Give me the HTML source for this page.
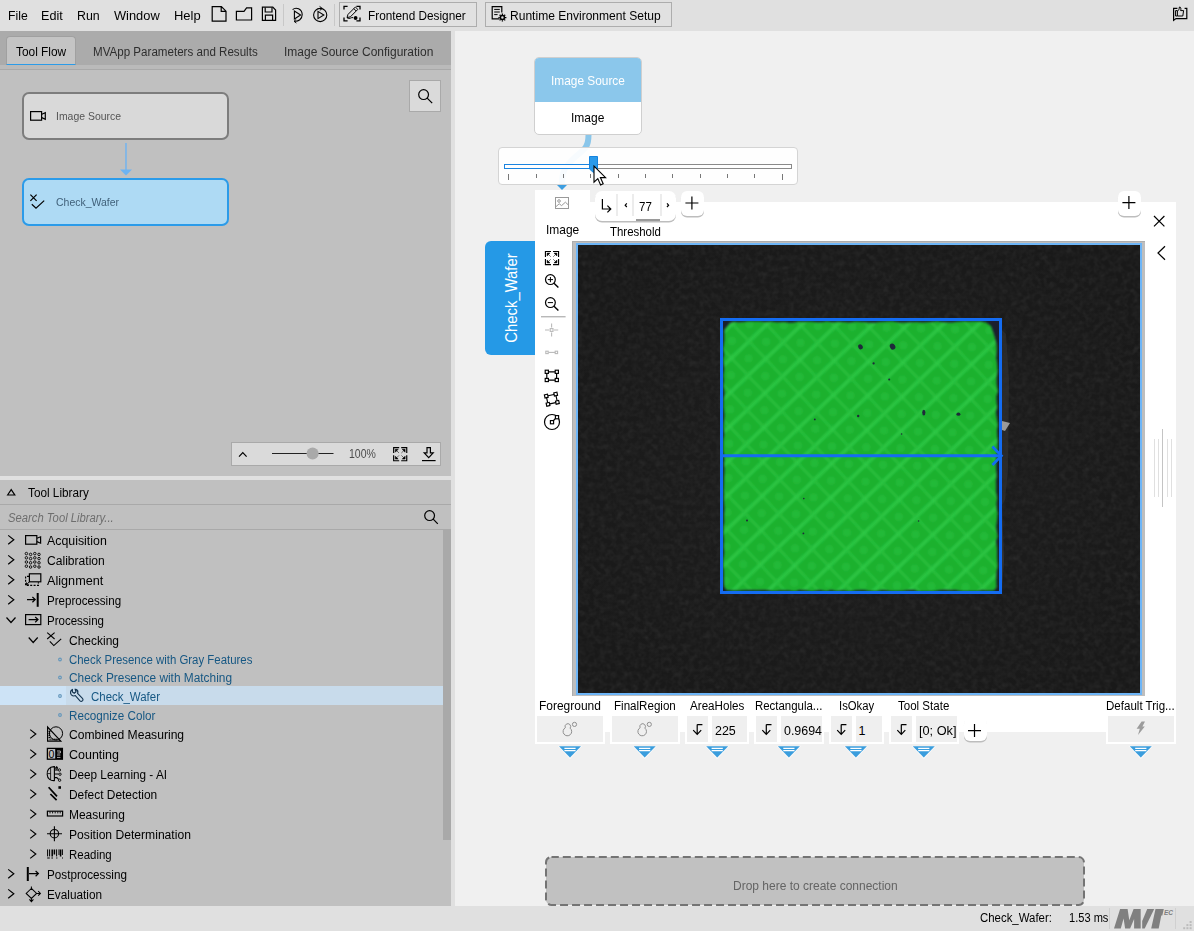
<!DOCTYPE html>
<html><head><meta charset="utf-8">
<style>
*{box-sizing:border-box;margin:0;padding:0}
html,body{width:1194px;height:931px;overflow:hidden;background:#f0f0f0;font-family:"Liberation Sans",sans-serif;font-size:12px;color:#000}
.a{position:absolute}
.t{position:absolute;white-space:nowrap;line-height:16px;height:16px}
svg{position:absolute;overflow:visible}
.tb{border:1px solid #adadad;background:#e1e1e1}
.gb{position:absolute;background:#efefef;top:716px;height:26px}
.wt{position:absolute;background:#fff;top:700px;height:44px}
.k{stroke:#000;fill:none;stroke-width:1.2}
</style></head><body>
<!-- ================= MENUBAR ================= -->
<div class="a" style="left:0;top:0;width:1194px;height:31px;background:#e0e0e0"></div>
<div class="a" style="left:283px;top:4px;width:1px;height:22px;background:#c8c8c8"></div>
<div class="a" style="left:334px;top:4px;width:1px;height:22px;background:#c8c8c8"></div>
<div class="a tb" style="left:339px;top:2px;width:138px;height:25px"></div>
<div class="a tb" style="left:485px;top:2px;width:187px;height:25px"></div>
<svg style="left:0;top:0" width="1194" height="31">
<g class="k" stroke-width="1.25">
 <!-- new file -->
 <path d="M212.2 6.6 H221.4 L226 11.2 V21.2 H212.2 Z M221.2 6.8 V11.4 H225.8"/>
 <!-- folder -->
 <path d="M236.4 20 V11.4 H244 L246.6 7.8 H251.6 V20 Z"/>
 <!-- save -->
 <path d="M262.4 7.2 H272.8 L275.6 10 V20.4 H262.4 Z"/>
 <path d="M265.2 7.4 V12 H272 V7.4 M265.4 20.2 V15.2 H272.6 V20.2"/>
 <!-- run once -->
 <path d="M294.4 11 V19 L300.6 15 Z" stroke-width="1.1"/>
 <path d="M292.6 9.6 C296 6.6 302 8.8 302.2 14.6 C302.2 19 298.4 21.6 294.6 21.2" stroke-width="1.1"/>
 <path d="M296.2 19.4 L294 21.3 L296.4 23" stroke-width="1"/>
 <!-- run loop -->
 <circle cx="320.2" cy="15" r="6.6" stroke-width="1.1"/>
 <path d="M318 11.4 V18.6 L323.8 15 Z" stroke-width="1.1"/>
 <path d="M319.6 6.4 L322.2 8.4 L319.8 10.4" stroke-width="1"/>
 <!-- frontend designer -->
 <path d="M344 9.6 V6.4 H347.6 M356.4 6.4 H360 V9.6 M360 17.6 V20.8 H356.4 M347.6 20.8 H344 V17.6" stroke-width="1.3"/>
 <path d="M347 17.6 L348 14.4 L355.4 7 L357.8 9.4 L350.4 16.8 Z M353.8 8.6 L356.2 11" stroke-width="1"/>
 <path d="M347 17.8 C350 19.6 351 17 353.2 17.6" stroke-width="1"/>
 <!-- runtime env -->
 <path d="M499.4 18.8 H492.2 V6.6 H501.8 V12.4" stroke-width="1.2"/>
 <path d="M494.2 9.4 H499.8 M494.2 12 H499.8 M494.2 14.6 H497.6" stroke-width="1"/>
 <circle cx="502.4" cy="17.6" r="2" stroke-width="1.5"/>
</g>
<circle cx="355.6" cy="18" r="1.9" fill="#000"/>
<g stroke="#000" stroke-width="1.3"><path d="M502.4 13.6 V15 M502.4 20.2 V21.6 M498.4 17.6 H499.8 M505 17.6 H506.4 M499.6 14.8 L500.6 15.8 M504.2 19.4 L505.2 20.4 M499.6 20.4 L500.6 19.4 M504.2 15.8 L505.2 14.8"/></g>
<!-- feedback icon -->
<g class="k" stroke-width="1.2"><path d="M1177.4 8.4 H1173.6 V20.4 L1176 18.6 H1186.8 V8.4 H1184.6"/><path d="M1175.6 10.6 H1177.4 V16 H1175.6 Z" stroke-width="1"/><path d="M1177.6 11 C1179 10.4 1179.2 8.6 1179.4 7 C1181 6.8 1181.2 9 1180.6 10.6 H1183.6 L1182.8 16 H1177.6" stroke-width="1"/></g>
</svg>


<!-- ================= LEFT PANEL ================= -->
<div class="a" style="left:0;top:31px;width:451px;height:875px;background:#c0c0c0"></div>
<div class="a" style="left:0;top:31px;width:451px;height:34px;background:#ababab"></div>
<div class="a" style="left:0;top:65px;width:451px;height:4px;background:#bababa"></div>
<div class="a" style="left:0;top:69px;width:451px;height:1px;background:#a9a9a9"></div>
<div class="a" style="left:5.6px;top:36px;width:70.8px;height:29px;background:#c4c4c4;border:1px solid #a0a0a0;border-bottom:1.2px solid #2b9be8;border-radius:4px 4px 0 0"></div>
<!-- flow nodes -->
<div class="a" style="left:22px;top:92px;width:207px;height:48px;background:#d9d9d9;border:2px solid #7d7d7d;border-radius:7px"></div>
<div class="a" style="left:22px;top:178px;width:207px;height:48px;background:#aedaf4;border:2px solid #2b9be9;border-radius:7px"></div>
<svg style="left:0;top:0" width="451" height="480">
 <line x1="126" y1="143" x2="126" y2="170" stroke="#6db3f2" stroke-width="1.4"/>
 <path d="M120 169.5 L132 169.5 L126 175.5 Z" fill="#6db3f2"/>
 <!-- camera icon -->
 <rect x="30.6" y="111.6" width="11" height="8.6" class="k"/>
 <path d="M41.8 114.2 L45.3 112.6 V119.2 L41.8 117.6" class="k"/>
 <!-- check icon -->
 <path d="M30.4 194.6 L36.6 200.8 M36.6 194.6 L30.4 200.8" class="k" stroke-width="1.1"/>
 <path d="M31.8 204.2 L36 208.2 L44.2 200.6" class="k" stroke-width="1.1"/>
</svg>
<!-- search button -->
<div class="a" style="left:409px;top:80px;width:32px;height:32px;background:#dadada;border:1px solid #a9a9a9"></div>
<svg style="left:409px;top:80px" width="32" height="32"><circle cx="14.6" cy="14.6" r="4.9" class="k" stroke-width="1.3"/><path d="M18.2 18.2 L23.2 23.2" class="k" stroke-width="1.5"/></svg>
<!-- zoom bar -->
<div class="a" style="left:231px;top:442px;width:210px;height:24px;background:#dadada;border:1px solid #a9a9a9"></div>
<svg style="left:231px;top:442px" width="210" height="24">
 <path d="M8 14.6 L11.8 10.6 L15.6 14.6" class="k" stroke-width="1.5"/>
 <line x1="41" y1="11.5" x2="102.5" y2="11.5" stroke="#222" stroke-width="1"/>
 <circle cx="81.6" cy="11.5" r="6" fill="#a9a9a9"/>
 <!-- fit icon -->
 <g transform="translate(-382.8 -245.8)"><g><path d="M545.45 256.9 V251.45 H551 M553 251.45 H558.55 V256.9 M545.45 259.1 V264.55 H551 M553 264.55 H558.55 V259.1" fill="none" stroke="#000" stroke-width="1.15"/>
<path d="M547.1 253.1 H550 L547.1 256 Z M556.9 253.1 H554 L556.9 256 Z M547.1 262.9 H550 L547.1 260 Z M556.9 262.9 H554 L556.9 260 Z" fill="#000" stroke="#000" stroke-width="0.5" stroke-linejoin="round"/>
<path d="M548.4 254.4 L550.8 256.8 M555.6 254.4 L553.2 256.8 M548.4 261.6 L550.8 259.2 M555.6 261.6 L553.2 259.2" stroke="#000" stroke-width="0.9" opacity="0.6" fill="none"/></g></g>
 <!-- download icon -->
 <path d="M196 5.6 H199.4 V10.8 H202.2 L197.7 15.6 L193.2 10.8 H196 Z" class="k" stroke-width="1.1"/>
 <line x1="191" y1="18.6" x2="204.6" y2="18.6" stroke="#000" stroke-width="1.2"/>
</svg>
<!-- h splitter -->
<div class="a" style="left:0;top:476px;width:451px;height:4px;background:#e0e0e0"></div>
<!-- tool library -->
<div class="a" style="left:0;top:504px;width:451px;height:1px;background:#a9a9a9"></div>
<div class="a" style="left:0;top:529px;width:451px;height:1px;background:#a9a9a9"></div>
<div class="a" style="left:443px;top:530px;width:8px;height:310px;background:#a9a9a9"></div>
<div class="a" style="left:0;top:686px;width:443px;height:19px;background:#c8dbeb"></div>
<div class="a" style="left:0;top:686px;width:66px;height:19px;background:#cde3f6"></div>
<svg style="left:0;top:480px" width="451" height="430">
 <path d="M7.6 15 L11.2 9.6 L14.8 15 Z" class="k" stroke-width="1.1"/>
 <circle cx="429.6" cy="35.6" r="4.9" class="k" stroke-width="1.2"/><path d="M433.2 39.2 L437.8 43.8" class="k" stroke-width="1.4"/>
</svg>
<svg style="left:0;top:0" width="451" height="931">
<g class="k" stroke-width="1.5">
<path d="M8.2 535.4 L13.8 539.8 L8.2 544.1999999999999"/>
<path d="M8.2 555.4 L13.8 559.8 L8.2 564.1999999999999"/>
<path d="M8.2 575.4 L13.8 579.8 L8.2 584.1999999999999"/>
<path d="M8.2 595.4 L13.8 599.8 L8.2 604.1999999999999"/>
<path d="M8.2 869.4 L13.8 873.8 L8.2 878.1999999999999"/>
<path d="M8.2 889.4 L13.8 893.8 L8.2 898.1999999999999"/>
<path d="M6.5 617.5 L11 622.5 L15.5 617.5"/>
<path d="M28.700000000000003 637.5 L33.2 642.5 L37.7 637.5"/>
<path d="M30.2 729.6 L35.8 734 L30.2 738.4"/>
<path d="M30.2 749.6 L35.8 754 L30.2 758.4"/>
<path d="M30.2 769.6 L35.8 774 L30.2 778.4"/>
<path d="M30.2 789.6 L35.8 794 L30.2 798.4"/>
<path d="M30.2 809.6 L35.8 814 L30.2 818.4"/>
<path d="M30.2 829.6 L35.8 834 L30.2 838.4"/>
<path d="M30.2 849.6 L35.8 854 L30.2 858.4"/>
</g>
<g class="k" stroke-width="1.15">
<rect x="25.6" y="535.6" width="11.2" height="8.6"/><path d="M36.9 538.2 L40.6 536.8 V543.2 L36.9 541.6"/>
<circle cx="26.4" cy="553.6" r="1.25" stroke-width="0.9"/><circle cx="30.6" cy="554.4" r="1.25" stroke-width="0.9"/><circle cx="34.8" cy="553.6" r="1.25" stroke-width="0.9"/><circle cx="39.0" cy="554.4" r="1.25" stroke-width="0.9"/><circle cx="26.4" cy="557.8" r="1.25" stroke-width="0.9"/><circle cx="30.6" cy="558.6" r="1.25" stroke-width="0.9"/><circle cx="34.8" cy="557.8" r="1.25" stroke-width="0.9"/><circle cx="39.0" cy="558.6" r="1.25" stroke-width="0.9"/><circle cx="26.4" cy="562.0" r="1.25" stroke-width="0.9"/><circle cx="30.6" cy="562.8" r="1.25" stroke-width="0.9"/><circle cx="34.8" cy="562.0" r="1.25" stroke-width="0.9"/><circle cx="39.0" cy="562.8" r="1.25" stroke-width="0.9"/><circle cx="26.4" cy="566.2" r="1.25" stroke-width="0.9"/><circle cx="30.6" cy="567.0" r="1.25" stroke-width="0.9"/><circle cx="34.8" cy="566.2" r="1.25" stroke-width="0.9"/><circle cx="39.0" cy="567.0" r="1.25" stroke-width="0.9"/>
<rect x="29.4" y="573.8" width="11.4" height="8"/><path d="M29 576.4 H25.6 V585.4 H38.4 V582.2" stroke-dasharray="2 1.4"/><path d="M29.4 581.8 L26.4 584.8 M26.4 582.4 V584.8 H28.8" stroke-width="1"/>
<path d="M27 599.6 H35.2 M32.4 597 L35.2 599.6 L32.4 602.2"/><path d="M37.7 593 V606.8" stroke-width="2"/>
<rect x="25.6" y="614.6" width="15.2" height="10"/><path d="M28.6 619.6 H38 M35.2 617 L38 619.6 L35.2 622.2"/>
<path d="M47.2 632.6 L54.6 639 M54.6 632.6 L47.2 639" stroke-width="1.1"/><path d="M49.8 641.4 L53.8 645.6 L61.2 638.8" stroke-width="1.1"/>
<path d="M47.6 727 V741.2 H60.8 Z" stroke-width="1.2"/><circle cx="56" cy="733.4" r="6.6" stroke-width="1"/><path d="M49.6 739.4 H57" stroke-dasharray="1 1" stroke-width="1.6"/><path d="M49.4 731 V739" stroke-dasharray="1 1" stroke-width="1.6"/>
<rect x="47.4" y="748.4" width="15" height="10.8" stroke-width="1.3"/>
<path d="M54.4 766.6 C49 766.4 46.6 771 47.2 774.4 C47.4 779 51 781 54.4 780.6 Z" stroke-width="1.1"/><path d="M54.4 770 H58 M54.4 774 H58.6 M54.4 777.6 H56.8 L58.6 779.4 M56.6 766.6 V768.6" stroke-width="1.1"/><circle cx="59.4" cy="770" r="1.2" stroke-width="0.9"/><circle cx="60" cy="774.2" r="1.2" stroke-width="0.9"/><circle cx="59.6" cy="780.2" r="1.2" stroke-width="0.9"/><circle cx="56.6" cy="768" r="1.1" stroke-width="0.9"/><path d="M50.6 767.4 V780 M47.4 773.6 H50.6" stroke-width="0.8"/>
<path d="M48.6 787.2 L57 796.4 M50.4 794 L56.6 800.2" stroke-width="1.7"/>
<rect x="47.4" y="811.2" width="15.2" height="4.8" stroke-width="1.2"/><path d="M50 811.4 V813.4 M52.6 811.4 V813.4 M55.2 811.4 V813.4 M57.8 811.4 V813.4 M60.2 811.4 V813.4" stroke-width="0.9"/>
<circle cx="54.4" cy="833.7" r="4.2" stroke-width="1.1"/><path d="M47 833.7 H62 M54.4 826.2 V841.2" stroke-width="1.1"/>
<path d="M47.6 849.4 V856.4 M49.6 849.4 V856.4 M56.6 849.4 V856.4 M59 849.4 V855 M62.4 849.4 V855" stroke-width="1"/><path d="M52.2 849.4 V856.4 M54.4 849.4 V854.6 M60.6 849.4 V856.4" stroke-width="1.5"/><path d="M47.2 858 H49.8 M51.4 858 H53 M56.2 858 H57.4 M62 858 H63" stroke-width="1"/>
<path d="M27.8 867 V881" stroke-width="2"/><path d="M29 873.6 H38.4 M35.6 871 L38.4 873.6 L35.6 876.2"/>
<path d="M31.4 888.4 L36.6 893.4 L31.4 898.4 L26.2 893.4 Z M31.4 886.4 V888.4 M36.6 893.4 H40.4 M38.2 891.2 L40.4 893.4 L38.2 895.6 M31.4 898.4 V901.4 M29.4 899.4 L31.4 901.6 L33.4 899.4" stroke-width="1.05"/>
</g>
<rect x="55.2" y="748.6" width="7.2" height="10.4" fill="#000"/><path d="M57 751 H60.4 V753 H57.4 M57 755 H60.4 M57 757.4 H60.4" stroke="#c0c0c0" stroke-width="0.9" fill="none"/><text x="48.4" y="757.9" font-family="Liberation Sans" font-size="10.6" fill="#000">0</text>
<rect x="58.4" y="786.2" width="2.6" height="2.6" fill="#000"/>
<circle cx="60" cy="659.5" r="1.35" fill="none" stroke="#6396bb" stroke-width="1.1"/><circle cx="60" cy="677.5" r="1.35" fill="none" stroke="#6396bb" stroke-width="1.1"/><circle cx="60" cy="696" r="1.35" fill="none" stroke="#6396bb" stroke-width="1.1"/><circle cx="60" cy="715" r="1.35" fill="none" stroke="#6396bb" stroke-width="1.1"/><path d="M72.4 689.6 C70.4 690.4 69.8 693 71.4 694.8 C72.6 696 74.2 696.2 75.4 695.6 L80 700.8 C81 701.8 82.8 701.4 83 699.8 C83 699 82.6 698.6 82.2 698.2 L77.6 693.4 C78.2 691.8 77.4 690 75.8 689.4 L75.2 689.4 L76 691.8 L74.2 693.2 L72.4 692 Z" fill="none" stroke="#14344f" stroke-width="1.15"/>
</svg>

<!-- v splitter -->
<div class="a" style="left:451px;top:31px;width:4px;height:875px;background:#e0e0e0"></div>

<!-- ================= RIGHT PANEL ================= -->
<!-- image source block -->
<div class="a" style="left:534px;top:57px;width:108px;height:78px;background:#fff;border:1px solid #cfcfcf;border-radius:5px;overflow:hidden"><div style="height:44px;background:#8bc7eb"></div></div>
<!-- connector -->
<svg style="left:0;top:0" width="1194" height="260">
 <path d="M588.5 135 C588.5 150 582 150 572 160 C562 170 562 176 562 186" fill="none" stroke="#8ac6ea" stroke-width="6"/>
 <path d="M556 184 H568 L562 190 Z" fill="#3b9de0"/>
</svg>
<!-- white panel -->
<div class="a" style="left:535px;top:190px;width:55px;height:20px;background:#fff"></div>
<div class="a" style="left:535px;top:202px;width:641px;height:530px;background:#fff"></div>
<div class="wt" style="left:535px;width:69.5px"></div>
<div class="wt" style="left:610px;width:69.6px"></div>
<div class="wt" style="left:685px;width:63.7px"></div>
<div class="wt" style="left:754px;width:70.0px"></div>
<div class="wt" style="left:829px;width:55.0px"></div>
<div class="wt" style="left:889px;width:70.0px"></div>
<div class="wt" style="left:1106px;width:70.0px"></div>

<!-- slider popup -->
<div class="a" style="left:498px;top:147px;width:300px;height:38px;background:rgba(255,255,255,0.93);border:1px solid #d4d4d4;border-radius:4px"></div>
<div class="a" style="left:504px;top:164px;width:288px;height:5px;background:#fff;border:1px solid #8a8a8a"></div>
<div class="a" style="left:504px;top:164px;width:89px;height:5px;background:#fff;border:1px solid #1b84e0"></div>
<svg style="left:0;top:0" width="700" height="200"><path d="M589.5 156.5 H597.5 V169 L593.5 172.6 L589.5 169 Z" fill="#2b9aea" stroke="#1583de" stroke-width="1"/></svg>
<div class="a" style="left:507.6px;top:173.7px;width:1.6px;height:6px;background:#777"></div>
<div class="a" style="left:535.6px;top:174px;width:1.6px;height:4px;background:#777"></div>
<div class="a" style="left:562.6px;top:174px;width:1.6px;height:4px;background:#777"></div>
<div class="a" style="left:589.6px;top:174px;width:1.6px;height:4px;background:#777"></div>
<div class="a" style="left:617.6px;top:174px;width:1.6px;height:4px;background:#777"></div>
<div class="a" style="left:644.6px;top:174px;width:1.6px;height:4px;background:#777"></div>
<div class="a" style="left:671.6px;top:174px;width:1.6px;height:4px;background:#777"></div>
<div class="a" style="left:699.6px;top:174px;width:1.6px;height:4px;background:#777"></div>
<div class="a" style="left:726.6px;top:174px;width:1.6px;height:4px;background:#777"></div>
<div class="a" style="left:753.6px;top:174px;width:1.6px;height:4px;background:#777"></div>
<div class="a" style="left:781.6px;top:173.7px;width:1.6px;height:6px;background:#777"></div>

<!-- cursor -->
<svg style="left:592.8px;top:165px" width="14" height="22"><path d="M1 1 V17.2 L4.8 13.6 L7.6 20 L10.2 18.8 L7.4 12.6 H12.6 Z" fill="#fff" stroke="#000" stroke-width="1.1" stroke-linejoin="miter"/></svg>

<!-- threshold control -->
<div class="a" style="left:595px;top:191px;width:81px;height:30px;background:#fff;border-radius:7px;box-shadow:0 1.5px 0 #bdbdbd"></div>
<div class="a" style="left:616px;top:194px;width:2px;height:22px;background:#ececec"></div>
<div class="a" style="left:632px;top:194px;width:2px;height:22px;background:#ececec"></div>
<div class="a" style="left:660px;top:194px;width:2px;height:22px;background:#ececec"></div>
<div class="a" style="left:636px;top:219px;width:24px;height:1.5px;background:#9a9a9a"></div>
<div class="a" style="left:681px;top:191px;width:23px;height:25px;background:#fff;border-radius:6px;box-shadow:0 1.5px 0 #bdbdbd"></div>
<div class="a" style="left:1118px;top:191px;width:23px;height:25px;background:#fff;border-radius:6px;box-shadow:0 1.5px 0 #bdbdbd"></div>
<svg style="left:0;top:0" width="1194" height="270">
 <path d="M602.4 199 V209 H610.6 M607.4 205.6 L610.8 209 L607.4 212.4" class="k" stroke-width="1.3"/>
 <path d="M626.8 203.4 L625.2 205.2 L626.8 207" class="k" stroke="#777" stroke-width="0.8"/>
 <path d="M667 203.4 L668.6 205.2 L667 207" class="k" stroke="#777" stroke-width="0.8"/>
 <path d="M685.4 203 H698.4 M691.9 196.5 V209.5" class="k" stroke-width="1.3"/>
 <path d="M1122.4 202.6 H1135.4 M1128.9 196.1 V209.1" class="k" stroke-width="1.3"/>
 <path d="M1154 216 L1164.4 226.4 M1164.4 216 L1154 226.4" class="k" stroke-width="1.3"/>
 <path d="M1165 246.2 L1158 253 L1165 259.8" class="k" stroke-width="1.3"/>
 <!-- image icon -->
 <g stroke="#9a9a9a" fill="none" stroke-width="1"><rect x="555.5" y="197.5" width="13" height="11"/><circle cx="559" cy="201" r="1.3"/><path d="M556 206.6 L559.2 203.8 L561.6 205.6 L565.4 202.2 L568.4 205"/></g>
</svg>
<!-- blue tab -->
<div class="a" style="left:485px;top:241px;width:50px;height:114px;background:#2599e6;border-radius:6px 0 0 6px"></div>
<svg style="left:0;top:0" width="600" height="450">
<g class="k" stroke-width="1.3">
 <!-- fit -->
<g id="fit"><path d="M545.45 256.9 V251.45 H551 M553 251.45 H558.55 V256.9 M545.45 259.1 V264.55 H551 M553 264.55 H558.55 V259.1" fill="none" stroke="#000" stroke-width="1.15"/>
<path d="M547.1 253.1 H550 L547.1 256 Z M556.9 253.1 H554 L556.9 256 Z M547.1 262.9 H550 L547.1 260 Z M556.9 262.9 H554 L556.9 260 Z" fill="#000" stroke="#000" stroke-width="0.5" stroke-linejoin="round"/>
<path d="M548.4 254.4 L550.8 256.8 M555.6 254.4 L553.2 256.8 M548.4 261.6 L550.8 259.2 M555.6 261.6 L553.2 259.2" stroke="#000" stroke-width="0.9" opacity="0.6" fill="none"/></g>
 <!-- zoom in -->
 <circle cx="550.4" cy="279.6" r="4.9" stroke-width="1.2"/><path d="M554 283.2 L558.4 287.6" stroke-width="1.4"/><path d="M547.8 279.6 H553 M550.4 277 V282.2" stroke-width="1"/>
 <!-- zoom out -->
 <circle cx="550.4" cy="302.6" r="4.9" stroke-width="1.2"/><path d="M554 306.2 L558.4 310.6" stroke-width="1.4"/><path d="M547.8 302.6 H553" stroke-width="1"/>
 <!-- rect -->
 <path d="M546.8 371.8 H556.6 V380.2 H546.8 Z" stroke-width="1.2"/>
 <!-- rot rect -->
 
 <!-- circle -->
 <circle cx="552" cy="422" r="7.5" stroke-width="1.2"/>
</g>
<g fill="#fff" stroke="#000" stroke-width="1.15">
 <rect x="545.2" y="370.2" width="3.2" height="3.2"/><rect x="555.2" y="370.2" width="3.2" height="3.2"/><rect x="545.2" y="378.4" width="3.2" height="3.2"/><rect x="555.2" y="378.4" width="3.2" height="3.2"/>
 <g transform="rotate(-12 551.8 399)"><path d="M547 395 H556.6 V403.4 H547 Z" fill="none"/><rect x="545.4" y="393.4" width="3.2" height="3.2"/><rect x="555" y="393.4" width="3.2" height="3.2"/><rect x="545.4" y="401.8" width="3.2" height="3.2"/><rect x="555" y="401.8" width="3.2" height="3.2"/></g>
 <path d="M552 422 L556.8 417.2" fill="none"/>
 <rect x="550.4" y="420.6" width="3.2" height="3.2"/><rect x="555.4" y="415.6" width="3.2" height="3.2"/>
</g>
<line x1="541" y1="316.8" x2="565.6" y2="316.8" stroke="#9a9a9a" stroke-width="1"/>
<g stroke="#b9b9b9" fill="none" stroke-width="1.1">
 <path d="M551.6 323.4 V327.6 M551.6 332.4 V336.6 M545 330 H549.2 M554 330 H558.2"/><rect x="550.2" y="328.6" width="2.8" height="2.8" fill="#fff"/>
 <path d="M548.4 352.4 H555"/><rect x="545.8" y="351.2" width="2.4" height="2.4" fill="#fff"/><rect x="555.2" y="351.2" width="2.4" height="2.4" fill="#fff"/>
</g>
</svg>

<!-- viewer -->
<div class="a" style="left:572px;top:241px;width:573px;height:455px;background:#bebebe;border-left:1px solid #adadad;border-top:1px solid #adadad"></div>
<div class="a" style="left:576px;top:243px;width:566px;height:452px;background:#6db5f7"></div>
<div class="a" id="img" style="left:578px;top:245px;width:562px;height:448px;background:#1b1b1b;overflow:hidden"><svg style="left:0;top:0" width="562" height="448" viewBox="578 245 562 448">
<defs>
 <filter id="nz" x="0" y="0" width="100%" height="100%" color-interpolation-filters="sRGB"><feTurbulence type="fractalNoise" baseFrequency="0.18" numOctaves="2" seed="4" result="n"/><feColorMatrix type="matrix" values="0 0 0 0 0.2  0 0 0 0 0.2  0 0 0 0 0.2  0.5 0.5 0.5 0 -0.62"/></filter>
 <pattern id="dia" x="749" y="341.3" width="34.3" height="34.3" patternUnits="userSpaceOnUse" patternTransform="rotate(1.5 749 341.3)">
  <rect width="34.3" height="34.3" fill="#1db12f"/>
  <circle cx="17.15" cy="0" r="4" fill="#24ba38"/><circle cx="17.15" cy="34.3" r="4" fill="#24ba38"/>
  <circle cx="0" cy="17.15" r="4" fill="#24ba38"/><circle cx="34.3" cy="17.15" r="4" fill="#24ba38"/>
  <path d="M0 0 L34.3 34.3" stroke="#2cc644" stroke-width="2.8" opacity="0.62"/>
  <path d="M34.3 0 L0 34.3" stroke="#2fca47" stroke-width="3.4" opacity="0.85"/>
 </pattern>
 <filter id="bl" x="-2%" y="-2%" width="104%" height="104%"><feGaussianBlur stdDeviation="0.8"/></filter>
 <radialGradient id="vg" cx="0.5" cy="0.5" r="0.6"><stop offset="0" stop-color="#1e1e1e"/><stop offset="1" stop-color="#191919"/></radialGradient>
</defs>
<rect x="578" y="245" width="562" height="448" fill="url(#vg)"/>
<rect x="578" y="245" width="562" height="448" filter="url(#nz)"/>
<!-- smudge right of wafer -->
<path d="M1002 330 L1006 334 L1009 380 L1008 470 L1005 500 L1002 505 Z" fill="#343434" opacity="0.55"/>
<path d="M1002 421 L1010 423 L1005 431 L1002 430 Z" fill="#9a9a9a"/>
<path d="M1002 505 L1004 560 L1002 590 Z" fill="#333"/>
<!-- wafer -->
<rect x="721" y="319" width="280" height="274" fill="#1b1f2e"/>
<path d="M724.3 330.0 L729.8 323.0 L733.8 321.7 L738.4 322.2 L742.7 322.1 L748.2 321.3 L754.2 321.3 L759.9 321.3 L764.3 321.9 L771.6 321.4 L776.5 322.2 L784.3 322.1 L789.9 322.8 L794.0 322.6 L799.2 321.4 L803.7 321.7 L810.9 321.5 L817.3 322.2 L822.8 322.1 L827.0 321.3 L831.8 322.3 L837.5 321.7 L843.9 321.9 L849.1 322.5 L855.9 321.6 L862.2 322.0 L869.7 322.4 L874.8 322.8 L879.3 321.9 L886.3 321.4 L892.3 321.3 L899.0 322.4 L905.3 322.6 L910.5 322.3 L916.9 322.1 L922.7 322.5 L930.5 322.0 L937.1 321.3 L944.0 322.2 L951.9 322.5 L957.1 321.8 L963.7 321.2 L969.6 321.5 L974.1 321.3 L981.1 321.4 L986.0 322.4 L991.0 326.0 L994.5 336.0 L996.5 344.0 L996.8 350.0 L996.2 357.5 L997.1 363.3 L997.6 370.8 L996.6 378.3 L996.7 383.9 L997.9 391.5 L996.4 396.1 L996.5 401.0 L997.2 406.9 L996.0 412.0 L996.7 417.7 L997.9 423.9 L997.0 430.7 L997.4 437.2 L997.8 441.4 L997.7 448.5 L996.8 455.7 L996.2 461.3 L996.1 467.8 L996.4 472.1 L996.7 476.7 L996.0 481.0 L996.2 485.6 L996.1 491.0 L997.2 498.5 L996.5 503.1 L996.7 508.5 L997.7 513.0 L996.9 521.0 L996.2 526.9 L996.7 531.3 L997.7 536.4 L996.0 541.0 L997.1 548.8 L997.1 553.4 L997.1 557.5 L997.7 565.4 L996.5 572.2 L996.3 577.7 L996.5 587.6 L994.0 590.6 L989.0 590.7 L981.9 590.3 L977.0 591.2 L969.1 591.2 L961.8 591.2 L954.9 590.1 L948.8 590.3 L944.7 589.8 L939.6 590.2 L932.8 591.4 L927.0 591.4 L919.1 591.4 L913.6 590.1 L908.7 590.1 L903.9 590.8 L896.3 591.2 L890.4 590.9 L883.2 589.9 L876.5 591.3 L869.4 591.1 L863.5 590.0 L856.3 590.3 L849.1 591.4 L843.5 590.4 L835.7 591.0 L831.1 589.9 L826.5 591.3 L819.2 590.0 L811.9 591.5 L805.3 590.3 L799.1 589.9 L795.0 591.4 L788.4 590.6 L780.7 590.5 L773.2 591.2 L768.4 590.2 L763.2 590.1 L756.9 590.2 L751.2 589.9 L743.5 590.3 L737.7 590.8 L730.1 590.5 L726.3 590.1 L724.1 586.6 L723.8 580.6 L723.8 574.5 L723.7 570.4 L723.0 565.7 L723.3 558.5 L724.2 552.6 L723.5 546.3 L723.9 540.3 L723.2 533.1 L723.4 526.9 L724.2 521.8 L723.9 515.8 L724.5 508.7 L724.0 502.9 L723.8 496.9 L723.7 490.2 L723.8 484.0 L724.1 476.3 L724.5 468.7 L723.9 463.7 L724.3 455.9 L723.2 451.4 L723.1 445.6 L723.1 440.7 L724.3 434.0 L723.2 426.4 L724.1 419.5 L724.4 415.0 L723.4 407.1 L723.6 399.3 L724.6 393.3 L723.3 386.0 L723.8 380.3 L723.3 374.9 L724.2 369.6 L723.9 365.6 L723.0 359.8 L724.0 354.5 L723.1 348.4 L724.3 340.5 Z" fill="url(#dia)" filter="url(#bl)"/>
<!-- holes -->
<g fill="#1e2a3a"><ellipse cx="860.5" cy="346.8" rx="2.2" ry="2.6" transform="rotate(-30 860.5 346.8)"/><ellipse cx="892.6" cy="346.6" rx="2.6" ry="3.2" transform="rotate(-30 892.6 346.6)"/><ellipse cx="923.8" cy="412.6" rx="1.6" ry="2.8"/><ellipse cx="958.4" cy="414.2" rx="2" ry="1.6"/><circle cx="858.2" cy="416" r="1.2"/><circle cx="873.6" cy="363.4" r="1.1"/><circle cx="889.2" cy="379.4" r="1"/><circle cx="814.8" cy="419.4" r="0.9"/><circle cx="901.6" cy="434" r="0.8"/><circle cx="747" cy="520.6" r="1"/><circle cx="803.4" cy="533.4" r="0.9"/><circle cx="918.6" cy="521" r="0.8"/><circle cx="803.8" cy="498.6" r="0.8"/></g>
<!-- roi -->
<rect x="721.5" y="319.5" width="279" height="273" fill="none" stroke="#146cf2" stroke-width="3"/>
<path d="M720 455.8 H1001" stroke="#146cf2" stroke-width="3" fill="none"/>
<path d="M992.4 446.6 L1001.4 455.8 L992.4 465" stroke="#146cf2" stroke-width="2.8" fill="none"/>
</svg>
</div>
<!-- resize grip -->
<div class="a" style="left:1162px;top:429px;width:1px;height:78px;background:#c4c4c4"></div>
<div class="a" style="left:1154px;top:439px;width:1px;height:58px;background:#e0e0e0"></div>
<div class="a" style="left:1158px;top:439px;width:1px;height:58px;background:#e0e0e0"></div>
<div class="a" style="left:1167px;top:439px;width:1px;height:58px;background:#e0e0e0"></div>
<div class="a" style="left:1171px;top:439px;width:1px;height:58px;background:#e0e0e0"></div>
<div class="gb" style="left:537px;width:66.0px"></div>
<div class="gb" style="left:612px;width:66.0px"></div>
<div class="gb" style="left:687px;width:20.7px"></div>
<div class="gb" style="left:711.8px;width:35.2px"></div>
<div class="gb" style="left:756.2px;width:20.6px"></div>
<div class="gb" style="left:781px;width:41.0px"></div>
<div class="gb" style="left:831px;width:20.7px"></div>
<div class="gb" style="left:855.9px;width:26.1px"></div>
<div class="gb" style="left:891px;width:21.0px"></div>
<div class="gb" style="left:916.2px;width:40.8px"></div>
<div class="gb" style="left:1108px;width:66.0px"></div>
<svg style="left:0;top:740px" width="1194" height="24"><path d="M557.8 6 H582.2 L570 19.2 Z" fill="#fafafa" opacity="0.9"/><path d="M559 6.2 H581 L570 17.6 Z" fill="#3a9ddd"/><path d="M564.4 8.4 H575.6 M564.4 10.6 H575.6" stroke="#fff" stroke-width="1.1"/><path d="M632.5 6 H656.9000000000001 L644.7 19.2 Z" fill="#fafafa" opacity="0.9"/><path d="M633.7 6.2 H655.7 L644.7 17.6 Z" fill="#3a9ddd"/><path d="M639.1 8.4 H650.3000000000001 M639.1 10.6 H650.3000000000001" stroke="#fff" stroke-width="1.1"/><path d="M705.0 6 H729.4000000000001 L717.2 19.2 Z" fill="#fafafa" opacity="0.9"/><path d="M706.2 6.2 H728.2 L717.2 17.6 Z" fill="#3a9ddd"/><path d="M711.6 8.4 H722.8000000000001 M711.6 10.6 H722.8000000000001" stroke="#fff" stroke-width="1.1"/><path d="M776.6999999999999 6 H801.1 L788.9 19.2 Z" fill="#fafafa" opacity="0.9"/><path d="M777.9 6.2 H799.9 L788.9 17.6 Z" fill="#3a9ddd"/><path d="M783.3 8.4 H794.5 M783.3 10.6 H794.5" stroke="#fff" stroke-width="1.1"/><path d="M843.6999999999999 6 H868.1 L855.9 19.2 Z" fill="#fafafa" opacity="0.9"/><path d="M844.9 6.2 H866.9 L855.9 17.6 Z" fill="#3a9ddd"/><path d="M850.3 8.4 H861.5 M850.3 10.6 H861.5" stroke="#fff" stroke-width="1.1"/><path d="M911.5999999999999 6 H936.0 L923.8 19.2 Z" fill="#fafafa" opacity="0.9"/><path d="M912.8 6.2 H934.8 L923.8 17.6 Z" fill="#3a9ddd"/><path d="M918.1999999999999 8.4 H929.4 M918.1999999999999 10.6 H929.4" stroke="#fff" stroke-width="1.1"/><path d="M1128.6 6 H1153.0 L1140.8 19.2 Z" fill="#fafafa" opacity="0.9"/><path d="M1129.8 6.2 H1151.8 L1140.8 17.6 Z" fill="#3a9ddd"/><path d="M1135.2 8.4 H1146.3999999999999 M1135.2 10.6 H1146.3999999999999" stroke="#fff" stroke-width="1.1"/><path d="M697.1999999999999 -15.4 V-5.8 M693.1999999999999 -9.8 L697.1999999999999 -5.6 L701.1999999999999 -9.8 M697.1999999999999 -15.4 H702.4" class="k" stroke-width="1.25"/><path d="M766.3 -15.4 V-5.8 M762.3 -9.8 L766.3 -5.6 L770.3 -9.8 M766.3 -15.4 H771.5" class="k" stroke-width="1.25"/><path d="M841.1999999999999 -15.4 V-5.8 M837.1999999999999 -9.8 L841.1999999999999 -5.6 L845.1999999999999 -9.8 M841.1999999999999 -15.4 H846.4" class="k" stroke-width="1.25"/><path d="M901.3 -15.4 V-5.8 M897.3 -9.8 L901.3 -5.6 L905.3 -9.8 M901.3 -15.4 H906.5" class="k" stroke-width="1.25"/><path d="M565.33 -12.28 A2.8 2.8 0 1 1 570.10 -11.84 A4.3 4.3 0 1 1 565.33 -12.28 Z" fill="none" stroke="#909090" stroke-width="1"/><circle cx="574.50" cy="-15.6" r="2.1" fill="none" stroke="#909090" stroke-width="1"/><path d="M640.13 -12.28 A2.8 2.8 0 1 1 644.90 -11.84 A4.3 4.3 0 1 1 640.13 -12.28 Z" fill="none" stroke="#909090" stroke-width="1"/><circle cx="649.30" cy="-15.6" r="2.1" fill="none" stroke="#909090" stroke-width="1"/><path d="M1141.6 -18.4 L1145 -18.4 L1142.4 -13.4 L1144.8 -13.4 L1138 -5 L1139.8 -11.2 L1136.6 -11.2 Z" fill="#9c9c9c"/></svg>

<!-- plus button bottom -->
<div class="a" style="left:964px;top:718px;width:23px;height:23px;background:#fff;border-radius:6px;box-shadow:0 1.5px 0 #bdbdbd"></div>
<svg style="left:0;top:700px" width="1194" height="60"><path d="M968 30.6 H981 M974.5 24.1 V37.1" class="k" stroke-width="1.3"/></svg>
<!-- drop zone -->
<svg style="left:0;top:850px" width="1194" height="60"><rect x="546" y="7" width="538" height="48" rx="5.5" fill="#c1c1c1" stroke="#747474" stroke-width="2" stroke-dasharray="8 4" stroke-dashoffset="0.7"/></svg>
<!-- ================= STATUS ================= -->
<div class="a" style="left:0;top:906px;width:1194px;height:25px;background:#e0e0e0"></div>
<div class="a" style="left:1109px;top:908px;width:1px;height:21px;background:#d0d0d0"></div>
<div class="a" style="left:1175px;top:908px;width:1px;height:21px;background:#d0d0d0"></div>
<svg style="left:0;top:0" width="1194" height="931">
<g fill="#808080">
 <path d="M1114.0 928.6 L1120.1 909.1 L1127.6 909.1 L1129.3 920.3 L1133.6 909.1 L1140.7 909.1 L1140.7 928.6 L1134.1 928.6 L1134.1 919.1 L1130.1 928.6 L1125.1 928.6 L1123.6 918.6 L1120.8 928.6 Z"/>
 <path d="M1142.2 928.6 L1142.2 921.1 L1147.2 909.1 L1154.2 909.1 L1144.7 928.6 Z"/>
 <path d="M1151.2 928.6 L1155.5 909.1 L1163.8 909.1 L1162.3 915.5 L1161.3 915.5 L1158.7 928.6 Z"/>
</g>
<text x="0" y="0" style="font-family:'Liberation Sans';font-size:7.8px;font-weight:700;font-style:italic" fill="#808080" transform="translate(1164 915.4) scale(0.84 1)">EC</text>
<g fill="#bcbcbc"><rect x="1189.6" y="921.0" width="2" height="2"/><rect x="1186.4" y="924.1" width="2" height="2"/><rect x="1189.6" y="924.1" width="2" height="2"/><rect x="1183.2" y="927.2" width="2" height="2"/><rect x="1186.4" y="927.2" width="2" height="2"/><rect x="1189.6" y="927.2" width="2" height="2"/></g>
</svg>

<div class="t" style="left:7.7px;top:7.5px;font-size:12.5px;color:#000;transform:scaleX(0.9774);transform-origin:0 0;">File</div>
<div class="t" style="left:40.6px;top:7.5px;font-size:12.5px;color:#000;transform:scaleX(1.0071);transform-origin:0 0;">Edit</div>
<div class="t" style="left:76.7px;top:7.5px;font-size:12.5px;color:#000;transform:scaleX(0.9896);transform-origin:0 0;">Run</div>
<div class="t" style="left:113.7px;top:7.5px;font-size:12.5px;color:#000;transform:scaleX(1.0277);transform-origin:0 0;">Window</div>
<div class="t" style="left:173.7px;top:7.5px;font-size:12.5px;color:#000;transform:scaleX(1.0382);transform-origin:0 0;">Help</div>
<div class="t" style="left:367.6px;top:7.5px;font-size:12.5px;color:#000;transform:scaleX(0.9437);transform-origin:0 0;">Frontend Designer</div>
<div class="t" style="left:509.6px;top:7.5px;font-size:12.5px;color:#000;transform:scaleX(0.9639);transform-origin:0 0;">Runtime Environment Setup</div>
<div class="t" style="left:16.1px;top:43.5px;font-size:12.5px;color:#000;transform:scaleX(0.9508);transform-origin:0 0;">Tool Flow</div>
<div class="t" style="left:92.7px;top:43.5px;font-size:12.5px;color:#2e2e2e;transform:scaleX(0.9272);transform-origin:0 0;">MVApp Parameters and Results</div>
<div class="t" style="left:283.6px;top:43.5px;font-size:12.5px;color:#2e2e2e;transform:scaleX(0.9592);transform-origin:0 0;">Image Source Configuration</div>
<div class="t" style="left:55.9px;top:108.2px;font-size:10.5px;color:#555;transform:scaleX(0.9943);transform-origin:0 0;">Image Source</div>
<div class="t" style="left:55.9px;top:194.2px;font-size:10.5px;color:#41617a;transform:scaleX(0.9965);transform-origin:0 0;">Check_Wafer</div>
<div class="t" style="left:349.4px;top:446.2px;font-size:12.5px;color:#4c4c4c;transform:scaleX(0.8410);transform-origin:0 0;">100%</div>
<div class="t" style="left:28.3px;top:484.7px;font-size:12.5px;color:#000;transform:scaleX(0.9408);transform-origin:0 0;">Tool Library</div>
<div class="t" style="left:7.7px;top:510.0px;font-size:12.5px;color:#6e6e6e;transform:scaleX(0.9002);transform-origin:0 0;font-style:italic;">Search Tool Library...</div>
<div class="t" style="left:47.0px;top:532.5px;font-size:12.5px;color:#000;transform:scaleX(0.9892);transform-origin:0 0;">Acquisition</div>
<div class="t" style="left:47.0px;top:552.5px;font-size:12.5px;color:#000;transform:scaleX(0.9671);transform-origin:0 0;">Calibration</div>
<div class="t" style="left:47.0px;top:572.5px;font-size:12.5px;color:#000;transform:scaleX(1.0127);transform-origin:0 0;">Alignment</div>
<div class="t" style="left:46.9px;top:592.5px;font-size:12.5px;color:#000;transform:scaleX(0.9273);transform-origin:0 0;">Preprocessing</div>
<div class="t" style="left:46.9px;top:612.5px;font-size:12.5px;color:#000;transform:scaleX(0.9217);transform-origin:0 0;">Processing</div>
<div class="t" style="left:69.0px;top:632.5px;font-size:12.5px;color:#000;transform:scaleX(0.9592);transform-origin:0 0;">Checking</div>
<div class="t" style="left:69.0px;top:651.5px;font-size:12.5px;color:#165783;transform:scaleX(0.9134);transform-origin:0 0;">Check Presence with Gray Features</div>
<div class="t" style="left:69.0px;top:669.5px;font-size:12.5px;color:#165783;transform:scaleX(0.9498);transform-origin:0 0;">Check Presence with Matching</div>
<div class="t" style="left:91.4px;top:688.5px;font-size:12.5px;color:#165783;transform:scaleX(0.9168);transform-origin:0 0;">Check_Wafer</div>
<div class="t" style="left:69.0px;top:707.5px;font-size:12.5px;color:#165783;transform:scaleX(0.9348);transform-origin:0 0;">Recognize Color</div>
<div class="t" style="left:69.0px;top:726.5px;font-size:12.5px;color:#000;transform:scaleX(0.9688);transform-origin:0 0;">Combined Measuring</div>
<div class="t" style="left:69.0px;top:746.5px;font-size:12.5px;color:#000;transform:scaleX(0.9991);transform-origin:0 0;">Counting</div>
<div class="t" style="left:69.0px;top:766.5px;font-size:12.5px;color:#000;transform:scaleX(0.9400);transform-origin:0 0;">Deep Learning - AI</div>
<div class="t" style="left:69.0px;top:786.5px;font-size:12.5px;color:#000;transform:scaleX(0.9543);transform-origin:0 0;">Defect Detection</div>
<div class="t" style="left:69.0px;top:806.5px;font-size:12.5px;color:#000;transform:scaleX(0.9559);transform-origin:0 0;">Measuring</div>
<div class="t" style="left:69.0px;top:826.5px;font-size:12.5px;color:#000;transform:scaleX(0.9693);transform-origin:0 0;">Position Determination</div>
<div class="t" style="left:69.0px;top:846.5px;font-size:12.5px;color:#000;transform:scaleX(0.9167);transform-origin:0 0;">Reading</div>
<div class="t" style="left:46.9px;top:866.5px;font-size:12.5px;color:#000;transform:scaleX(0.9348);transform-origin:0 0;">Postprocessing</div>
<div class="t" style="left:46.9px;top:886.5px;font-size:12.5px;color:#000;transform:scaleX(0.9422);transform-origin:0 0;">Evaluation</div>
<div class="t" style="left:551.4px;top:72.8px;font-size:13px;color:#fff;transform:scaleX(0.9131);transform-origin:0 0;">Image Source</div>
<div class="t" style="left:571.1px;top:110.4px;font-size:13px;color:#000;transform:scaleX(0.9242);transform-origin:0 0;">Image</div>
<div class="t" style="left:546.1px;top:222.4px;font-size:13px;color:#000;transform:scaleX(0.9186);transform-origin:0 0;">Image</div>
<div class="t" style="left:610.1px;top:224.2px;font-size:13px;color:#000;transform:scaleX(0.8804);transform-origin:0 0;">Threshold</div>
<div class="t" style="left:638.9px;top:198.5px;font-size:12.5px;color:#000;transform:scaleX(0.9204);transform-origin:0 0;">77</div>
<div class="t" style="left:538.9px;top:698.0px;font-size:12.5px;color:#000;transform:scaleX(0.9578);transform-origin:0 0;">Foreground</div>
<div class="t" style="left:613.9px;top:698.0px;font-size:12.5px;color:#000;transform:scaleX(0.9263);transform-origin:0 0;">FinalRegion</div>
<div class="t" style="left:690.0px;top:698.0px;font-size:12.5px;color:#000;transform:scaleX(0.9302);transform-origin:0 0;">AreaHoles</div>
<div class="t" style="left:755.4px;top:698.0px;font-size:12.5px;color:#000;transform:scaleX(0.9149);transform-origin:0 0;">Rectangula...</div>
<div class="t" style="left:838.6px;top:698.0px;font-size:12.5px;color:#000;transform:scaleX(0.9047);transform-origin:0 0;">IsOkay</div>
<div class="t" style="left:898.2px;top:698.0px;font-size:12.5px;color:#000;transform:scaleX(0.9228);transform-origin:0 0;">Tool State</div>
<div class="t" style="left:1106.1px;top:698.0px;font-size:12.5px;color:#000;transform:scaleX(0.9241);transform-origin:0 0;">Default Trig...</div>
<div class="t" style="left:714.9px;top:722.7px;font-size:12.5px;color:#000;transform:scaleX(0.9972);transform-origin:0 0;">225</div>
<div class="t" style="left:783.9px;top:722.7px;font-size:12.5px;color:#000;transform:scaleX(0.9939);transform-origin:0 0;">0.9694</div>
<div class="t" style="left:858.6px;top:722.7px;font-size:12.5px;color:#000;transform:scaleX(1.0000);transform-origin:0 0;">1</div>
<div class="t" style="left:919.2px;top:722.7px;font-size:12.5px;color:#000;transform:scaleX(1.0182);transform-origin:0 0;">[0; Ok]</div>
<div class="t" style="left:732.6px;top:877.8px;font-size:12.5px;color:#646464;transform:scaleX(0.9596);transform-origin:0 0;">Drop here to create connection</div>
<div class="t" style="left:980.2px;top:910.0px;font-size:12.5px;color:#000;transform:scaleX(0.9132);transform-origin:0 0;">Check_Wafer:</div>
<div class="t" style="left:1068.5px;top:910.0px;font-size:12.5px;color:#000;transform:scaleX(0.8860);transform-origin:0 0;">1.53 ms</div>
<div class="t" style="left:510.5px;top:298px;font-size:16.5px;color:#fff;transform:translate(-50%,-50%) rotate(-90deg) scaleX(0.9);line-height:20px;height:20px">Check_Wafer</div>

</body></html>
